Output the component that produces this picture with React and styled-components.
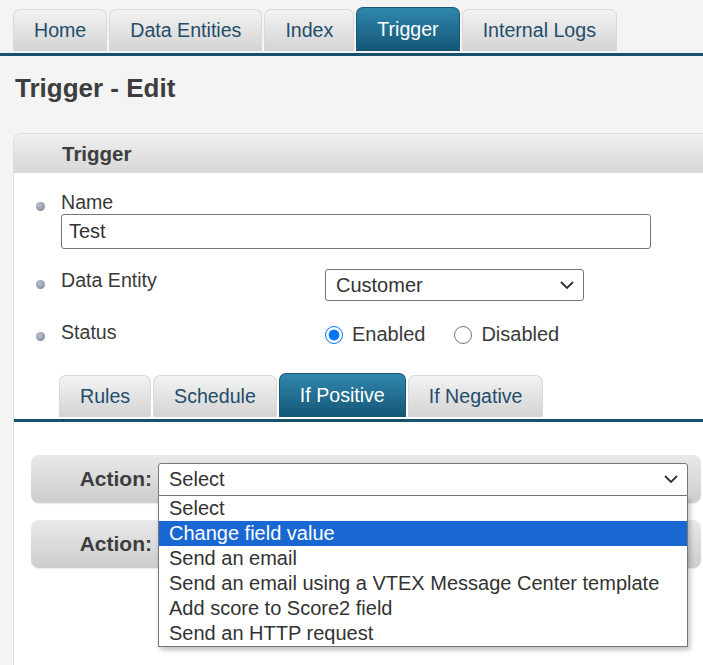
import styled, { createGlobalStyle } from 'styled-components';

const GlobalStyle = createGlobalStyle`
  html, body {
    margin: 0;
    padding: 0;
  }
  body {
    background: #f4f4f4;
    font-family: "Liberation Sans", Arial, sans-serif;
    color: #3a3a3a;
    overflow: hidden;
    height: 665px;
  }
`;

const mainTabs = ['Home', 'Data Entities', 'Index', 'Trigger', 'Internal Logs'];
const triggerTabs = ['Rules', 'Schedule', 'If Positive', 'If Negative'];
const actionOptions = [
  'Select',
  'Change field value',
  'Send an email',
  'Send an email using a VTEX Message Center template',
  'Add score to Score2 field',
  'Send an HTTP request',
];

const Chevron = () => (
  <svg width="14" height="8" viewBox="0 0 14 8">
    <path d="M1 1 L7 7 L13 1" fill="none" stroke="#333" strokeWidth="1.8" />
  </svg>
);

const App = () => {
  return (
    <>
      <GlobalStyle />
      <TabStrip $indent={13} $top={7}>
        {mainTabs.map(t => (
          <Tab key={t} $active={t === 'Trigger'}>
            {t}
          </Tab>
        ))}
      </TabStrip>

      <Title>Trigger - Edit</Title>

      <Panel>
        <PanelHeader>Trigger</PanelHeader>
        <PanelBody>
          <FieldList>
            <Field>
              <Bullet />
              <Stack>
                <Label>Name</Label>
                <TextInput defaultValue="Test" />
              </Stack>
            </Field>
            <Field $gap={20}>
              <Bullet />
              <Label $width={264}>Data Entity</Label>
              <SelectBox $w={259} $h={32}>
                <span>Customer</span>
                <Chevron />
              </SelectBox>
            </Field>
            <Field $gap={20}>
              <Bullet />
              <Label $width={264}>Status</Label>
              <RadioGroup>
                <RadioLabel>
                  <Radio type="radio" name="status" defaultChecked />
                  Enabled
                </RadioLabel>
                <RadioLabel>
                  <Radio type="radio" name="status" />
                  Disabled
                </RadioLabel>
              </RadioGroup>
            </Field>
          </FieldList>

          <TabStrip $indent={45} $top={0} $margin={27}>
            {triggerTabs.map(t => (
              <Tab key={t} $active={t === 'If Positive'}>
                {t}
              </Tab>
            ))}
          </TabStrip>

          <Actions>
            <ActionBar>
              <ActionLabel>Action:</ActionLabel>
              <SelectWrap>
                <SelectBox $w={530} $h={33} $open>
                  <span>Select</span>
                  <Chevron />
                </SelectBox>
                <OptionList>
                  {actionOptions.map((o, i) => (
                    <Option key={o} $selected={i === 1}>
                      {o}
                    </Option>
                  ))}
                </OptionList>
              </SelectWrap>
            </ActionBar>
            <ActionBar>
              <ActionLabel>Action:</ActionLabel>
            </ActionBar>
          </Actions>
        </PanelBody>
      </Panel>
    </>
  );
};

const TabStrip = styled.div`
  display: flex;
  align-items: flex-end;
  gap: 2px;
  height: 44px;
  margin-top: ${p => p.$margin || 0}px;
  padding: ${p => p.$top}px 0 2px ${p => p.$indent}px;
  border-bottom: 3px solid #18506e;
`;

const Tab = styled.div`
  box-sizing: border-box;
  height: ${p => (p.$active ? 44 : 42)}px;
  padding: 0 20px 1px;
  display: flex;
  align-items: center;
  border: 1px solid ${p => (p.$active ? '#1a5777' : '#d9d9d9')};
  border-bottom: none;
  border-radius: 7px 7px 0 0;
  background: ${p =>
    p.$active
      ? 'linear-gradient(#2f87ad, #155676)'
      : 'linear-gradient(#f3f3f3, #d3d3d3)'};
  color: ${p => (p.$active ? '#ffffff' : '#1f4d6b')};
  font-size: 19.6px;
  white-space: nowrap;
`;

const Title = styled.h1`
  margin: 17px 0 30px 15px;
  font-size: 26px;
  line-height: 30px;
  font-weight: 700;
  color: #3d3d3d;
`;

const Panel = styled.div`
  margin-left: 13px;
  width: 705px;
  min-height: 560px;
  background: #ffffff;
  border: 1px solid #dcdcdc;
  border-right: none;
  border-top-left-radius: 8px;
`;

const PanelHeader = styled.div`
  height: 39px;
  display: flex;
  align-items: center;
  padding-left: 48px;
  border-top-left-radius: 7px;
  background: linear-gradient(#efefef, #d7d7d7);
  font-size: 20.5px;
  font-weight: 700;
  color: #3d3d3d;
`;

const PanelBody = styled.div`
  padding-top: 18px;
`;

const FieldList = styled.div`
  display: flex;
  flex-direction: column;
  padding-left: 22px;
`;

const Field = styled.div`
  display: flex;
  align-items: flex-start;
  margin-top: ${p => p.$gap || 0}px;
`;

const Bullet = styled.span`
  flex: none;
  width: 9px;
  height: 9px;
  margin: 11px 16px 0 0;
  border-radius: 50%;
  background: radial-gradient(circle at 40% 35%, #bcc4d0, #737d8d);
`;

const Stack = styled.div`
  display: flex;
  flex-direction: column;
`;

const Label = styled.span`
  flex: none;
  width: ${p => (p.$width ? `${p.$width}px` : 'auto')};
  font-size: 19.6px;
  line-height: 23px;
  color: #3a3a3a;
`;

const TextInput = styled.input`
  box-sizing: border-box;
  width: 590px;
  height: 35px;
  margin: 0;
  padding: 0 7px;
  border: 1px solid #767676;
  border-radius: 3px;
  font-family: inherit;
  font-size: 20px;
  color: #333;
  outline: none;
`;

const SelectWrap = styled.div`
  position: relative;
`;

const SelectBox = styled.div`
  box-sizing: border-box;
  width: ${p => p.$w}px;
  height: ${p => p.$h}px;
  display: flex;
  align-items: center;
  justify-content: space-between;
  padding: 0 9px 0 10px;
  background: #ffffff;
  border: 1px solid #767676;
  border-radius: ${p => (p.$open ? '3px 3px 0 0' : '3px')};
  font-size: 20px;
  color: #333;
`;

const RadioGroup = styled.div`
  display: flex;
  align-items: center;
  gap: 29px;
  padding-top: 2px;
`;

const RadioLabel = styled.label`
  display: flex;
  align-items: center;
  gap: 9px;
  font-size: 20px;
  color: #3a3a3a;
`;

const Radio = styled.input`
  width: 18px;
  height: 18px;
  margin: 0;
  accent-color: #0075ff;
`;

const Actions = styled.div`
  display: flex;
  flex-direction: column;
  gap: 17px;
  padding: 33px 18px 0 17px;
`;

const ActionBar = styled.div`
  height: 48px;
  display: flex;
  align-items: center;
  border-radius: 8px;
  background: linear-gradient(#e9e9e9, #cdcdcd);
  box-shadow: 0 1px 1px rgba(0, 0, 0, 0.08);
`;

const ActionLabel = styled.span`
  box-sizing: border-box;
  flex: none;
  width: 127px;
  padding-right: 6px;
  text-align: right;
  font-size: 21px;
  font-weight: 700;
  color: #3d3d3d;
`;

const OptionList = styled.div`
  position: absolute;
  top: 100%;
  left: 0;
  z-index: 5;
  box-sizing: border-box;
  width: 100%;
  background: #ffffff;
  border: 1px solid #767676;
  border-top: none;
  box-shadow: 2px 3px 5px rgba(0, 0, 0, 0.25);
`;

const Option = styled.div`
  height: 25px;
  line-height: 25px;
  padding-left: 10px;
  font-size: 20px;
  white-space: nowrap;
  background: ${p => (p.$selected ? '#1967d2' : 'transparent')};
  color: ${p => (p.$selected ? '#ffffff' : '#333')};
`;

export default App;
